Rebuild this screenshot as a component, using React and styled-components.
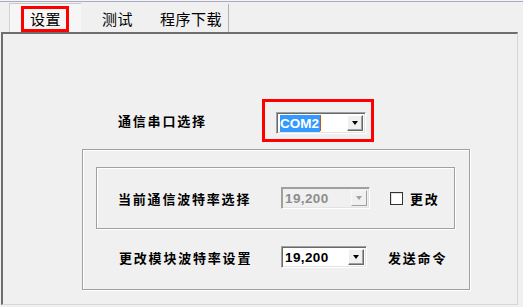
import React from 'react'
import styled, { createGlobalStyle } from 'styled-components'

const GlobalStyle = createGlobalStyle`
  html, body {
    margin: 0;
    padding: 0;
    background: #f0f0f0;
  }
  body {
    font-family: "Noto Sans CJK SC", "Liberation Sans", sans-serif;
  }
`

const Window = styled.div`
  width: 523px;
  height: 307px;
  box-sizing: border-box;
  background: #f0f0f0;
  border-top: 1px solid #f4f4f8;
  display: flex;
  flex-direction: column;
  overflow: hidden;
  &::before {
    content: '';
    display: block;
    height: 1px;
    background: #a9a9c2;
  }
`

const TabStrip = styled.div`
  display: flex;
  align-items: flex-end;
  height: 30px;
  padding-left: 9px;
`

const Tab = styled.div`
  box-sizing: border-box;
  width: ${p => p.w}px;
  height: ${p => (p.active ? 29 : 28)}px;
  display: flex;
  align-items: center;
  justify-content: center;
  font-size: 15px;
  letter-spacing: 0.5px;
  color: #000;
  position: relative;
  background: ${p => (p.active ? '#f6f6f6' : 'transparent')};
  border-top: ${p => (p.active ? '1px solid #c9c9c9' : 'none')};
  border-left: ${p => (p.active ? '1px solid #d2d2d2' : 'none')};
  border-right: ${p => (p.edge ? '1px solid #b0b0b0' : 'none')};
`

const TabFocus = styled.span`
  position: absolute;
  left: 11px;
  top: 2px;
  width: 48px;
  height: 26px;
  box-sizing: border-box;
  border: 3px solid #ff0000;
  pointer-events: none;
`

const Panel = styled.div`
  box-sizing: border-box;
  margin-left: 1px;
  width: 517px;
  height: 273px;
  border-top: 2px solid #6e6e6e;
  border-left: 2px solid #6e6e6e;
  border-right: 1px solid #d6d6d6;
  border-bottom: 1px solid #d6d6d6;
  padding: 65px 0 0 79px;
`

const PortRow = styled.div`
  display: flex;
  align-items: center;
  margin-left: 36px;
`

const Label = styled.span`
  width: ${p => p.w}px;
  flex-shrink: 0;
  font-size: 13px;
  font-weight: 700;
  letter-spacing: 1.8px;
  color: #000;
  white-space: nowrap;
`

const FocusBox = styled.div`
  border: 3px solid #ff0000;
  padding: 10px 5px 5px 11px;
`

const Combo = styled.div`
  box-sizing: border-box;
  width: ${p => p.w}px;
  height: 22px;
  display: flex;
  align-items: center;
  background: ${p => (p.disabled ? '#f0f0f0' : '#ffffff')};
  border-style: solid;
  border-width: 1px;
  border-color: #a0a0a0 #ffffff #ffffff #a0a0a0;
  box-shadow: inset 1px 1px 0 ${p => (p.disabled ? '#a0a0a0' : '#696969')},
    inset -1px -1px 0 #e3e3e3;
  padding: 2px 2px 2px 3px;
`

const ComboText = styled.span`
  flex: 1;
  display: flex;
  align-items: center;
  height: 100%;
  font-family: "Liberation Sans", Arial, sans-serif;
  font-weight: 700;
  font-size: 13.5px;
  letter-spacing: 0.4px;
  color: ${p => (p.disabled ? '#8d8d8d' : '#000')};
`

const Selected = styled.span`
  background: #3399ff;
  color: #fff;
  height: 17px;
  line-height: 17px;
  letter-spacing: 0;
  padding-right: 1px;
`

const Caret = styled.span`
  width: 1px;
  height: 16px;
  background: #c0581a;
`

const DropButton = styled.div`
  box-sizing: border-box;
  width: 16px;
  height: 100%;
  display: flex;
  align-items: center;
  justify-content: center;
  background: #f0f0f0;
  border-style: solid;
  border-width: 1px;
  border-color: ${p => (p.disabled ? '#f8f8f8 #a0a0a0 #a0a0a0 #f8f8f8' : '#ffffff #696969 #696969 #ffffff')};
  box-shadow: ${p => (p.disabled ? 'none' : 'inset -1px -1px 0 #a0a0a0')};
  &::after {
    content: '';
    width: 0;
    height: 0;
    border-left: 3.5px solid transparent;
    border-right: 3.5px solid transparent;
    border-top: 4px solid ${p => (p.disabled ? '#a0a0a0' : '#000')};
  }
`

const GroupBox = styled.div`
  box-sizing: border-box;
  width: ${p => p.w}px;
  height: ${p => p.h}px;
  border: 1px solid #a0a0a0;
  box-shadow: inset 1px 1px 0 #ffffff, 1px 1px 0 #ffffff;
`

const Outer = styled(GroupBox)`
  margin-top: 7px;
  padding: 17px 0 0 13px;
`

const Inner = styled(GroupBox)`
  display: flex;
  align-items: center;
  padding-left: 21px;
`

const SendRow = styled.div`
  display: flex;
  align-items: center;
  margin: 17px 0 0 23px;
`

const Check = styled.span`
  box-sizing: border-box;
  width: 13px;
  height: 13px;
  margin-left: 20px;
  background: #fff;
  border: 1px solid #333;
  box-shadow: inset 1px 1px 0 #e0e0e0;
  flex-shrink: 0;
`

const Text = styled(Label)`
  width: auto;
  margin-left: ${p => p.ml}px;
`

export default function App() {
  return (
    <>
      <GlobalStyle />
      <Window>
        <TabStrip>
          <Tab w={72} active>
            设置
            <TabFocus />
          </Tab>
          <Tab w={73}>测试</Tab>
          <Tab w={75} edge>
            程序下载
          </Tab>
        </TabStrip>
        <Panel>
          <PortRow>
            <Label w={144}>通信串口选择</Label>
            <FocusBox>
              <Combo w={90}>
                <ComboText>
                  <Selected>COM2</Selected>
                  <Caret />
                </ComboText>
                <DropButton />
              </Combo>
            </FocusBox>
          </PortRow>
          <Outer w={388} h={141}>
            <Inner w={359} h={62}>
              <Label w={163}>当前通信波特率选择</Label>
              <Combo w={89} disabled>
                <ComboText disabled>19,200</ComboText>
                <DropButton disabled />
              </Combo>
              <Check />
              <Text ml={7}>更改</Text>
            </Inner>
            <SendRow>
              <Label w={162}>更改模块波特率设置</Label>
              <Combo w={86}>
                <ComboText>19,200</ComboText>
                <DropButton />
              </Combo>
              <Text ml={21}>发送命令</Text>
            </SendRow>
          </Outer>
        </Panel>
      </Window>
    </>
  )
}
